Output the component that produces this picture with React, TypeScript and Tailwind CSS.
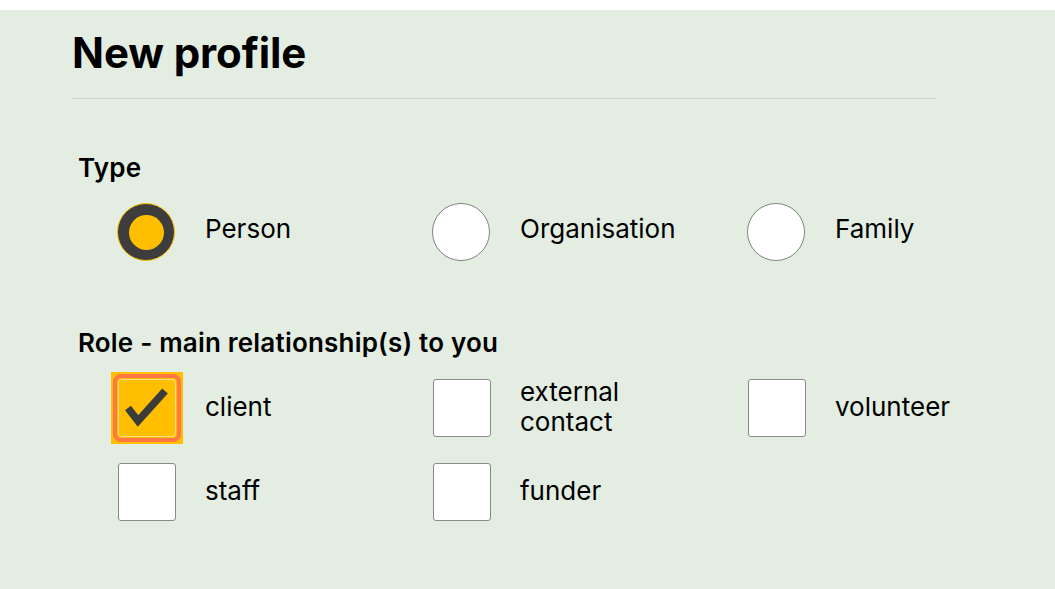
import { useState } from "react";

type Option = { id: string; label: string };

const types: Option[] = [
  { id: "person", label: "Person" },
  { id: "organisation", label: "Organisation" },
  { id: "family", label: "Family" },
];

const roles: Option[] = [
  { id: "client", label: "client" },
  { id: "external", label: "external contact" },
  { id: "volunteer", label: "volunteer" },
  { id: "staff", label: "staff" },
  { id: "funder", label: "funder" },
];

const Radio = ({ checked }: { checked: boolean }) => {
  if (checked) {
    return (
      <div className="w-[58px] h-[58px] shrink-0 rounded-full bg-[#3d3d3d] border border-[#ffbf00] flex items-center justify-center">
        <div className="w-[35px] h-[35px] rounded-full bg-[#ffbf00]" />
      </div>
    );
  }
  return (
    <div className="w-[58px] h-[58px] shrink-0 rounded-full bg-white border border-[#808080]" />
  );
};

const Checkbox = ({ checked }: { checked: boolean }) => {
  if (checked) {
    return (
      <div className="w-[72px] h-[72px] -m-[7px] shrink-0 bg-[#ffbf00] p-[2px]">
        <div className="w-full h-full rounded-[8px] border-4 border-[#ff7747] p-[1px]">
          <div className="w-full h-full rounded-[4px] border border-[#ffe08a] bg-[#ffbf00] flex items-center justify-center">
            <svg width="58" height="58" viewBox="0 0 58 58" className="-m-[4px]">
              <polyline
                points="10,29 20,42 47,12"
                fill="none"
                stroke="#3b3b3b"
                strokeWidth="7.5"
                strokeLinecap="butt"
                strokeLinejoin="miter"
              />
            </svg>
          </div>
        </div>
      </div>
    );
  }
  return (
    <div className="w-[58px] h-[58px] shrink-0 rounded-[3px] bg-white border border-[#8a8a8a]" />
  );
};

export default function App() {
  const [type, setType] = useState("person");
  const [selectedRoles, setSelectedRoles] = useState<string[]>(["client"]);

  return (
    <div
      className="bg-white pt-[10px] text-black"
      style={{ fontFamily: "Inter, 'Noto Sans', sans-serif" }}
    >
      <div className="bg-[#e3ede2] min-h-[579px] pl-[72px] pr-[119px] pt-[22px]">
        <h1 className="text-[42px] leading-[42px] font-bold tracking-[-0.1px]">
          New profile
        </h1>
        <hr className="mt-[24px] border-0 border-t border-[#d2d2d2]" />

        <div className="mt-[56px] pl-[6px]">
          <h2 className="text-[26px] leading-[26px] font-semibold tracking-[0.2px]">
            Type
          </h2>
          <div className="mt-[22px] grid grid-cols-[315px_315px_auto] pl-[39px]">
            {types.map((t) => (
              <button
                key={t.id}
                onClick={() => setType(t.id)}
                className="flex items-center gap-x-[30px] text-left"
              >
                <Radio checked={type === t.id} />
                <span className="text-[26px] leading-[30px] pb-[7px]">{t.label}</span>
              </button>
            ))}
          </div>
        </div>

        <div className="mt-[69px] pl-[6px]">
          <h2 className="text-[26px] leading-[26px] font-semibold tracking-[0.2px]">
            Role - main relationship(s) to you
          </h2>
          <div className="mt-[21px] grid grid-cols-[315px_315px_auto] gap-y-[24px] pl-[40px]">
            {roles.map((r) => {
              const checked = selectedRoles.includes(r.id);
              return (
                <button
                  key={r.id}
                  onClick={() =>
                    setSelectedRoles(
                      checked
                        ? selectedRoles.filter((x) => x !== r.id)
                        : [...selectedRoles, r.id]
                    )
                  }
                  className="flex items-center gap-x-[29px] text-left"
                >
                  <Checkbox checked={checked} />
                  <span className="text-[26px] leading-[30px] max-w-[130px] pb-[2px]">
                    {r.label}
                  </span>
                </button>
              );
            })}
          </div>
        </div>
      </div>
    </div>
  );
}
